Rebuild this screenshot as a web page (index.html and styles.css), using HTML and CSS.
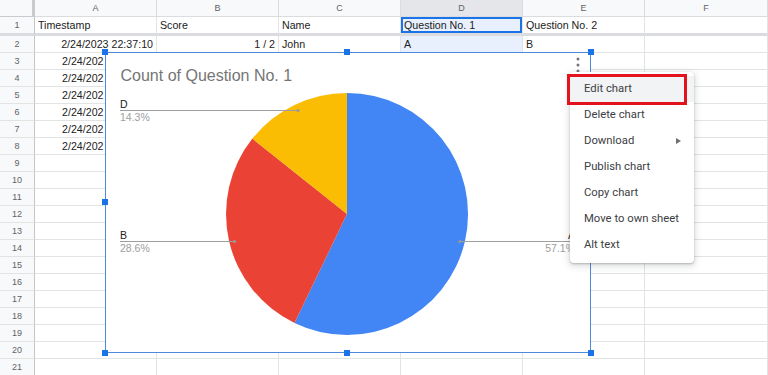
FILE: index.html
```html
<!DOCTYPE html>
<html lang="en">
<head>
    <meta charset="UTF-8">
    <meta name="viewport" content="width=device-width, initial-scale=1.0">
    <link rel="stylesheet" href="styles.css">
    <title>Quiz responses</title>
</head>
<body>
<div class="sheet">

    <div class="row head">
        <div class="corner"></div>
        <div>A</div><div>B</div><div>C</div><div class="sel">D</div><div>E</div><div>F</div>
    </div>
    <div class="row r1">
        <div class="num">1</div>
        <div>Timestamp</div><div>Score</div><div>Name</div><div class="active">Question No. 1</div><div>Question No. 2</div><div></div>
    </div>
    <div class="row">
        <div class="num">2</div>
        <div class="right">2/24/2023 22:37:10</div><div class="right">1 / 2</div><div>John</div><div class="picked">A</div><div>B</div><div></div>
    </div>
    <!-- rows 3-8: the chart sits over most of them, only the start of the date shows -->
    <div class="row">
        <div class="num">3</div>
        <div class="cut">2/24/202</div><div></div><div></div><div class="picked"></div><div></div><div></div>
    </div>
    <div class="row">
        <div class="num">4</div>
        <div class="cut">2/24/202</div><div></div><div></div><div class="picked"></div><div></div><div></div>
    </div>
    <div class="row">
        <div class="num">5</div>
        <div class="cut">2/24/202</div><div></div><div></div><div class="picked"></div><div></div><div></div>
    </div>
    <div class="row">
        <div class="num">6</div>
        <div class="cut">2/24/202</div><div></div><div></div><div class="picked"></div><div></div><div></div>
    </div>
    <div class="row">
        <div class="num">7</div>
        <div class="cut">2/24/202</div><div></div><div></div><div class="picked"></div><div></div><div></div>
    </div>
    <div class="row">
        <div class="num">8</div>
        <div class="cut">2/24/202</div><div></div><div></div><div class="picked"></div><div></div><div></div>
    </div>
    <div class="row"><div class="num">9</div><div></div><div></div><div></div><div></div><div></div><div></div></div>
    <div class="row"><div class="num">10</div><div></div><div></div><div></div><div></div><div></div><div></div></div>
    <div class="row"><div class="num">11</div><div></div><div></div><div></div><div></div><div></div><div></div></div>
    <div class="row"><div class="num">12</div><div></div><div></div><div></div><div></div><div></div><div></div></div>
    <div class="row"><div class="num">13</div><div></div><div></div><div></div><div></div><div></div><div></div></div>
    <div class="row"><div class="num">14</div><div></div><div></div><div></div><div></div><div></div><div></div></div>
    <div class="row"><div class="num">15</div><div></div><div></div><div></div><div></div><div></div><div></div></div>
    <div class="row"><div class="num">16</div><div></div><div></div><div></div><div></div><div></div><div></div></div>
    <div class="row"><div class="num">17</div><div></div><div></div><div></div><div></div><div></div><div></div></div>
    <div class="row"><div class="num">18</div><div></div><div></div><div></div><div></div><div></div><div></div></div>
    <div class="row"><div class="num">19</div><div></div><div></div><div></div><div></div><div></div><div></div></div>
    <div class="row"><div class="num">20</div><div></div><div></div><div></div><div></div><div></div><div></div></div>
    <div class="row"><div class="num">21</div><div></div><div></div><div></div><div></div><div></div><div></div></div>

    <!-- chart floating over the grid -->
    <div class="chart">
        <svg class="chart-svg" width="484" height="299" viewBox="0 0 484 299">
            <text x="14.5" y="28" class="chart-title">Count of Question No. 1</text>

            <circle cx="472" cy="6" r="1.5" fill="#757575"/>
            <circle cx="472" cy="12" r="1.5" fill="#757575"/>
            <circle cx="472" cy="18" r="1.5" fill="#757575"/>

            <path d="M241,161 L241,40 A121,121 0 1 1 188.5,270 Z" fill="#4285f4"/>
            <path d="M241,161 L188.5,270 A121,121 0 0 1 146.4,85.6 Z" fill="#ea4335"/>
            <path d="M241,161 L146.4,85.6 A121,121 0 0 1 241,40 Z" fill="#fbbc04"/>

            <line x1="14" y1="57.5" x2="192" y2="57.5" class="leader"/>
            <circle cx="192" cy="57.5" r="1.6" fill="#999"/>
            <text x="14" y="55" class="lbl">D</text>
            <text x="14" y="67.5" class="pct">14.3%</text>

            <line x1="14" y1="188.5" x2="128.5" y2="188.5" class="leader"/>
            <circle cx="128.5" cy="188.5" r="1.6" fill="#999"/>
            <text x="14" y="186" class="lbl">B</text>
            <text x="14" y="198.5" class="pct">28.6%</text>

            <line x1="354" y1="188.5" x2="469" y2="188.5" class="leader"/>
            <circle cx="354" cy="188.5" r="1.6" fill="#999"/>
            <text x="469" y="186" class="lbl" text-anchor="end">A</text>
            <text x="469" y="198.5" class="pct" text-anchor="end">57.1%</text>
        </svg>
        <span class="handle tl"></span>
        <span class="handle tc"></span>
        <span class="handle tr"></span>
        <span class="handle ml"></span>
        <span class="handle mr"></span>
        <span class="handle bl"></span>
        <span class="handle bc"></span>
        <span class="handle br"></span>
    </div>

    <div class="menu">
        <div class="menu-item hover">Edit chart<span class="mark"></span></div>
        <div class="menu-item">Delete chart</div>
        <div class="menu-item">Download<span class="sub"></span></div>
        <div class="menu-item">Publish chart</div>
        <div class="menu-item">Copy chart</div>
        <div class="menu-item">Move to own sheet</div>
        <div class="menu-item">Alt text</div>
    </div>

</div>
</body>
</html>
```

FILE: styles.css
```css
body {
    margin: 0;
    font-family: "Liberation Sans", Arial, sans-serif;
    background-color: #fff;
}
.sheet {
    position: relative;
    width: 768px;
    height: 375px;
    overflow: hidden;
}
.row {
    display: grid;
    grid-template-columns: 35px repeat(5, 122px) 1fr;
    height: 17px;
}
.row > div {
    box-sizing: border-box;
    border-right: 1px solid #e2e3e3;
    border-bottom: 1px solid #e2e3e3;
    padding: 0 3px;
    font-size: 10.67px;
    line-height: 16px;
    color: #222;
    white-space: nowrap;
    overflow: hidden;
}
.row > .num {
    background-color: #f8f9fa;
    color: #5f6368;
    font-size: 9px;
    text-align: center;
    border-right-color: #c4c7c9;
}
.head > div {
    background-color: #f8f9fa;
    color: #5f6368;
    font-size: 9px;
    text-align: center;
    border-color: #dadce0;
}
.head > .sel {
    background-color: #e4e6e9;
}
.head > .corner {
    border-right: 3px solid #c9cbce;
    border-bottom-color: #c9cbce;
}
.r1 {
    height: 19px;
}
.r1 > div {
    border-bottom: 3px solid #dadce0;
}
.right {
    text-align: right;
}
/* date shown only up to the chart's left edge */
.row > .cut {
    padding-left: 27px;
}
.row > .active {
    background-color: #e8f0fe;
    box-shadow: inset 0 0 0 2px #1a73e8;
}
.row > .picked {
    background-color: #e8f0fe;
}

/* chart */
.chart {
    position: absolute;
    left: 105px;
    top: 52px;
    width: 486px;
    height: 301px;
    box-sizing: border-box;
    border: 1px solid #4a89dc;
    background-color: #fff;
}
.chart-svg {
    display: block;
    font-family: "Liberation Sans", Arial, sans-serif;
}
.chart-title {
    font-size: 16px;
    fill: #757575;
}
.leader {
    stroke: #9e9e9e;
    stroke-width: 1;
}
.lbl {
    font-size: 10.5px;
    fill: #222;
}
.pct {
    font-size: 10.5px;
    fill: #9e9e9e;
}
.handle {
    position: absolute;
    width: 6px;
    height: 6px;
    background-color: #1a73e8;
}
.tl { left: -4px; top: -4px; }
.tc { left: 238px; top: -4px; }
.tr { right: -4px; top: -4px; }
.ml { left: -4px; top: 146px; }
.mr { right: -4px; top: 146px; }
.bl { left: -4px; bottom: -4px; }
.bc { left: 238px; bottom: -4px; }
.br { right: -4px; bottom: -4px; }

/* context menu */
.menu {
    position: absolute;
    left: 570px;
    top: 72px;
    width: 124px;
    padding: 4px 0 5px;
    background-color: #fff;
    border-radius: 4px;
    box-shadow: 0 1px 2px rgba(60, 64, 67, 0.3), 0 2px 6px 2px rgba(60, 64, 67, 0.15);
    font-family: Roboto, "Liberation Sans", sans-serif;
}
.menu-item {
    position: relative;
    height: 26px;
    line-height: 26px;
    padding-left: 14px;
    font-size: 11.3px;
    color: #3c4043;
}
.menu-item.hover {
    background-color: #f1f3f4;
}
.mark {
    position: absolute;
    left: -3px;
    top: -2px;
    width: 120px;
    height: 31px;
    box-sizing: border-box;
    border: 3px solid #e3131d;
}
.sub {
    position: absolute;
    right: 13px;
    top: 10px;
    width: 0;
    height: 0;
    border-left: 5px solid #6b6e72;
    border-top: 3px solid transparent;
    border-bottom: 3px solid transparent;
}
```
